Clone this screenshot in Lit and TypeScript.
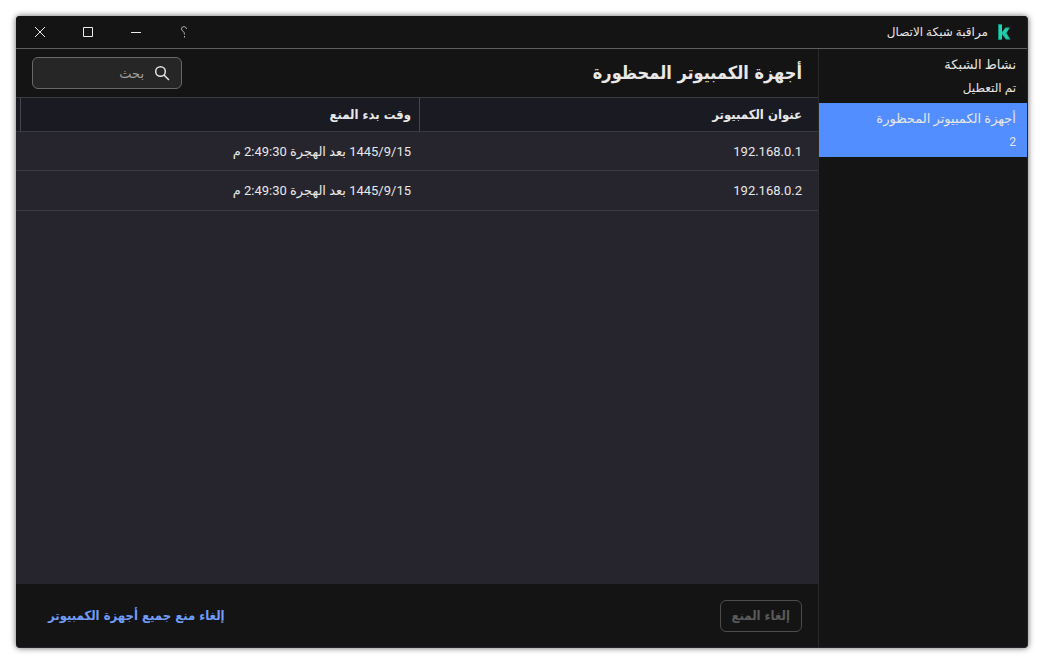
import { LitElement, html, css } from "lit";
import { customElement, property, state } from "lit/decorators.js";

interface BlockedComputer {
  address: string;
  time: string;
}

@customElement("title-bar")
class TitleBar extends LitElement {
  @property() heading = "";

  static styles = css`
    :host {
      display: flex;
      align-items: center;
      justify-content: space-between;
      height: 32px;
      border-bottom: 1px solid #5e5e5e;
      background: #141414;
    }
    .brand {
      display: flex;
      align-items: center;
      gap: 8px;
      padding-inline-start: 15px;
      font-size: 12px;
    }
    .logo {
      width: 16px;
      height: 16px;
    }
    .controls {
      display: flex;
    }
    .control {
      display: grid;
      place-items: center;
      width: 48px;
      height: 32px;
      padding: 0;
      border: 0;
      background: none;
      color: #ececec;
    }
    .icon {
      width: 16px;
      height: 16px;
      fill: none;
      stroke: currentColor;
    }
    .help {
      color: #b4b4b4;
    }
  `;

  render() {
    return html`
      <div class="brand">
        <svg class="logo" viewBox="0 0 16 16" aria-hidden="true">
          <path fill="#0b8f78" d="M2 0h4v16H2z" />
          <path fill="#23d1ae" d="M3 1h3v14H3z" />
          <path fill="#12b698" d="M6 8 9.500 3.500H14L10.500 9 14.500 15.500H10L6 10.500z" />
          <path fill="#23d1ae" d="M6.500 8.500 10 4.500h2.500L9 9.300l3.500 5H10.500z" />
        </svg>
        <span>${this.heading}</span>
      </div>
      <div class="controls">
        <button class="control help" aria-label="مساعدة">
          <svg class="icon" viewBox="0 0 16 16">
            <path d="M10.500 5C10.500 2 5.500 1.800 5.500 4.800C5.500 7 8.500 7 8.500 10.500M8.500 12v1.500" />
          </svg>
        </button>
        <button class="control" aria-label="تصغير">
          <svg class="icon" viewBox="0 0 16 16"><path d="M3 8.500h10" /></svg>
        </button>
        <button class="control" aria-label="تكبير">
          <svg class="icon" viewBox="0 0 16 16"><path d="M3.500 3.500h9v9h-9z" /></svg>
        </button>
        <button class="control" aria-label="إغلاق">
          <svg class="icon" viewBox="0 0 16 16"><path d="m3 3 10 10M13 3 3 13" /></svg>
        </button>
      </div>
    `;
  }
}

@customElement("side-item")
class SideItem extends LitElement {
  @property() label = "";
  @property() detail = "";
  @property({ type: Boolean, reflect: true }) selected = false;

  static styles = css`
    :host {
      display: block;
    }
    .item {
      display: block;
      padding: 4px 11px;
      color: #e6e6e6;
      text-decoration: none;
    }
    :host([selected]) .item {
      background: #528eff;
    }
    .label {
      display: block;
      font-size: 13px;
      line-height: 24px;
    }
    .detail {
      display: block;
      font-size: 12px;
      line-height: 22px;
    }
  `;

  render() {
    return html`
      <a class="item" href="#" aria-current=${this.selected ? "page" : "false"}>
        <span class="label">${this.label}</span>
        <span class="detail">${this.detail}</span>
      </a>
    `;
  }
}

@customElement("app-root")
class AppRoot extends LitElement {
  @state() private query = "";

  private computers: BlockedComputer[] = [
    { address: "192.168.0.1", time: "1445/9/15 بعد الهجرة 2:49:30 م" },
    { address: "192.168.0.2", time: "1445/9/15 بعد الهجرة 2:49:30 م" },
  ];

  static styles = css`
    :host {
      display: block;
      box-sizing: border-box;
      min-height: 100vh;
      padding: 16px;
      background: #fff;
      color: #e8e8e8;
      font-family: Roboto, "DejaVu Sans", sans-serif;
      font-size: 13px;
    }
    .window {
      display: flex;
      flex-direction: column;
      box-sizing: border-box;
      min-height: calc(100vh - 32px);
      border: 1px solid #24242c;
      border-top-width: 0;
      border-inline-end-width: 0;
      border-radius: 4px;
      overflow: hidden;
      background: #141414;
      box-shadow: 0 0 6px rgba(0, 0, 0, 0.6);
    }
    .body {
      display: flex;
      flex: 1;
    }
    .sidebar {
      width: 208px;
      border-inline-end: 1px solid #2a2a2a;
    }
    .main {
      display: flex;
      flex-direction: column;
      flex: 1;
    }
    .header {
      display: flex;
      align-items: center;
      justify-content: space-between;
      height: 48px;
      padding: 0 16px;
    }
    .title {
      margin: 0;
      font-family: "DejaVu Sans Condensed", sans-serif;
      font-size: 18px;
      font-weight: 700;
      line-height: 28px;
    }
    .search {
      display: flex;
      align-items: center;
      gap: 10px;
      box-sizing: border-box;
      width: 150px;
      height: 32px;
      padding: 0 11px;
      border: 1px solid #686868;
      border-radius: 6px;
      background: #262626;
    }
    .glass {
      flex: none;
      width: 16px;
      height: 16px;
      fill: none;
      stroke: #e2e2e2;
      stroke-width: 1.5;
    }
    .query {
      flex: 1;
      min-width: 0;
      padding: 0;
      border: 0;
      outline: 0;
      background: none;
      color: inherit;
      font: inherit;
    }
    .query::placeholder {
      color: #a0a0a0;
    }
    .content {
      flex: 1;
      background: #26252e;
    }
    .table {
      width: 100%;
      border-collapse: separate;
      border-spacing: 0;
      table-layout: fixed;
      text-align: start;
    }
    .table th {
      box-sizing: border-box;
      height: 35px;
      padding: 0 16px;
      border-block: 1px solid #3a3a42;
      border-inline-end: 1px solid #45454d;
      background: #1a1a22;
      font-family: "DejaVu Sans Condensed", sans-serif;
      font-weight: 700;
      text-align: start;
    }
    .table td {
      box-sizing: border-box;
      height: 39px;
      padding: 0 16px;
      border-bottom: 1px solid #3d3c45;
    }
    .table tr:last-child td {
      height: 40px;
    }
    .table .time {
      padding-inline-start: 8px;
    }
    .table .spacer {
      width: 4px;
      padding: 0;
      border-inline-end: 0;
    }
    .footer {
      display: flex;
      align-items: center;
      justify-content: space-between;
      height: 63px;
      padding: 0 16px;
    }
    .button,
    .link {
      font-family: "DejaVu Sans Condensed", sans-serif;
      font-size: 13px;
      font-weight: 700;
    }
    .button {
      height: 32px;
      padding: 0 11px;
      border: 1px solid #4c4c4c;
      border-radius: 6px;
      background: none;
      color: #5a5a5a;
    }
    .link {
      padding: 0 16px;
      color: #709cf8;
      text-decoration: none;
    }
  `;

  render() {
    const rows = this.computers.filter((c) => c.address.includes(this.query));
    return html`
      <div class="window" dir="rtl" lang="ar">
        <title-bar heading="مراقبة شبكة الاتصال"></title-bar>
        <div class="body">
          <nav class="sidebar">
            <side-item label="نشاط الشبكة" detail="تم التعطيل"></side-item>
            <side-item label="أجهزة الكمبيوتر المحظورة" detail="2" selected></side-item>
          </nav>
          <main class="main">
            <header class="header">
              <h1 class="title">أجهزة الكمبيوتر المحظورة</h1>
              <label class="search">
                <svg class="glass" viewBox="0 0 16 16" aria-hidden="true">
                  <circle cx="6.500" cy="6.500" r="4.800" />
                  <path d="m10 10 5 5" />
                </svg>
                <input
                  class="query"
                  type="text"
                  placeholder="بحث"
                  aria-label="بحث"
                  .value=${this.query}
                  @input=${(e: Event) => (this.query = (e.target as HTMLInputElement).value)}
                />
              </label>
            </header>
            <div class="content">
              <table class="table">
                <thead>
                  <tr>
                    <th>عنوان الكمبيوتر</th>
                    <th class="time">وقت بدء المنع</th>
                    <th class="spacer"></th>
                  </tr>
                </thead>
                <tbody>
                  ${rows.map(
                    (c) => html`
                      <tr>
                        <td>${c.address}</td>
                        <td class="time" colspan="2">${c.time}</td>
                      </tr>
                    `
                  )}
                </tbody>
              </table>
            </div>
            <footer class="footer">
              <button class="button" disabled>إلغاء المنع</button>
              <a class="link" href="#">إلغاء منع جميع أجهزة الكمبيوتر</a>
            </footer>
          </main>
        </div>
      </div>
    `;
  }
}
